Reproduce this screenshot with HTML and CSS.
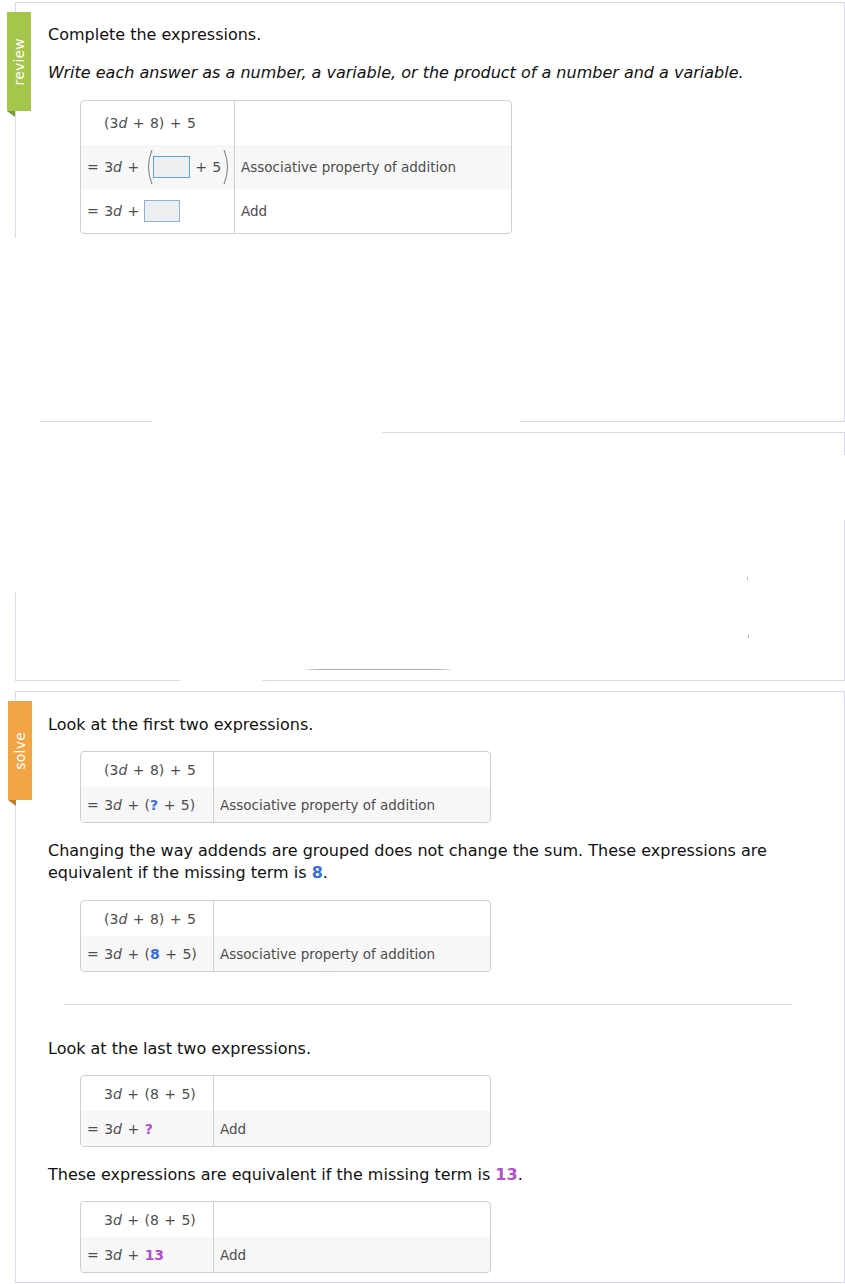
FILE: index.html
```html
<!DOCTYPE html>
<html>
<head>
<meta charset="utf-8">
<link rel="stylesheet" href="styles.css">
</head>
<body>
<div class="page">
  <section class="card review-card">
    <div class="tab tab-review"><span>review</span></div>
    <div class="review-main">
      <p class="lead">Complete the expressions.</p>
      <p class="lead italic">Write each answer as a number, a variable, or the product of a number and a variable.</p>
      <div class="steps steps-wide">
        <div class="step">
          <div class="expr first">(3<i>d</i> + 8) + 5</div>
          <div class="reason"></div>
        </div>
        <div class="step shaded">
          <div class="expr"><span class="eq">= 3<i>d</i> +</span><svg class="paren paren-l" width="8" height="36" viewBox="0 0 8 36"><path d="M7 1 Q0 18 7 35" fill="none" stroke="#777" stroke-width="1"/></svg><span class="blank blank-active"></span><span class="plus5">+ 5</span><svg class="paren paren-r" width="8" height="36" viewBox="0 0 8 36"><path d="M1 1 Q8 18 1 35" fill="none" stroke="#777" stroke-width="1"/></svg></div>
          <div class="reason">Associative property of addition</div>
        </div>
        <div class="step">
          <div class="expr"><span class="eq">= 3<i>d</i> +</span><span class="blank blank-plain"></span></div>
          <div class="reason">Add</div>
        </div>
      </div>
    </div>
    <div class="review-blank"></div>
  </section>
  <div class="rule-row">
    <span class="seg seg-a"></span><span class="seg seg-b"></span>
  </div>
  <div class="rule-row rule-gap">
    <span class="seg seg-c"></span>
  </div>
  <section class="ghost">
    <div class="ghost-a"></div>
    <div class="ghost-b"></div>
    <div class="ghost-c"><span class="tick"></span></div>
    <div class="ghost-d">
      <span class="tick"></span>
      <span class="grayline"></span>
    </div>
  </section>
  <div class="rule-row">
    <span class="seg seg-d"></span><span class="seg seg-e"></span>
  </div>

  <section class="card solve-card">
    <div class="tab tab-solve"><span>solve</span></div>
    <p class="lead">Look at the first two expressions.</p>
    <div class="steps">
      <div class="step">
        <div class="expr first">(3<i>d</i> + 8) + 5</div>
        <div class="reason"></div>
      </div>
      <div class="step shaded">
        <div class="expr">= 3<i>d</i> + (<b class="blue">?</b> + 5)</div>
        <div class="reason">Associative property of addition</div>
      </div>
    </div>
    <p class="lead para">Changing the way addends are grouped does not change the sum. These expressions are equivalent if the missing term is <b class="blue">8</b>.</p>
    <div class="steps">
      <div class="step">
        <div class="expr first">(3<i>d</i> + 8) + 5</div>
        <div class="reason"></div>
      </div>
      <div class="step shaded">
        <div class="expr">= 3<i>d</i> + (<b class="blue">8</b> + 5)</div>
        <div class="reason">Associative property of addition</div>
      </div>
    </div>
    <hr class="divider">
    <p class="lead">Look at the last two expressions.</p>
    <div class="steps">
      <div class="step">
        <div class="expr first">3<i>d</i> + (8 + 5)</div>
        <div class="reason"></div>
      </div>
      <div class="step shaded">
        <div class="expr">= 3<i>d</i> + <b class="purple">?</b></div>
        <div class="reason">Add</div>
      </div>
    </div>
    <p class="lead">These expressions are equivalent if the missing term is <b class="purple">13</b>.</p>
    <div class="steps">
      <div class="step">
        <div class="expr first">3<i>d</i> + (8 + 5)</div>
        <div class="reason"></div>
      </div>
      <div class="step shaded">
        <div class="expr">= 3<i>d</i> + <b class="purple">13</b></div>
        <div class="reason">Add</div>
      </div>
    </div>
  </section>
</div>
</body>
</html>
```

FILE: styles.css
```css
* { box-sizing: border-box; }
body {
  margin: 0;
  background: #fff;
  font-family: "DejaVu Sans", Verdana, sans-serif;
  color: #111;
}
.page {
  width: 845px;
  padding-top: 2px;
}
.card {
  position: relative;
  margin-left: 15px;
  width: 830px;
  border-top: 1px solid #dcd7f6;
  border-right: 1px solid #dcd7f6;
}
.tab {
  position: absolute;
  left: -8px;
  top: 9px;
  width: 24px;
  height: 99px;
  display: flex;
  align-items: center;
  justify-content: center;
}
.tab::after {
  content: "";
  position: absolute;
  left: 0;
  bottom: -6px;
  width: 0;
  height: 0;
  border-top: 6px solid #7d9a34;
  border-left: 8px solid transparent;
}
.tab span {
  writing-mode: vertical-rl;
  transform: rotate(180deg);
  color: #fff;
  font-size: 14px;
  letter-spacing: 0.2px;
}
.tab-review { background: #a4c64a; }
.tab-solve { background: #f1a545; }
.tab-solve::after { border-top-color: #c47e2a; }

.review-main {
  height: 235px;
  border-left: 1px solid #dcd7f6;
  padding: 21px 0 0 32px;
}
.review-blank { height: 183px; }

.lead {
  margin: 0;
  font-size: 16px;
  line-height: 22px;
}
.italic {
  font-style: italic;
  margin-top: 16px;
}
.steps {
  margin: 15px 0 17px 32px;
  width: 411px;
  border: 1px solid #cfcfcf;
  border-radius: 4px;
  overflow: hidden;
  color: #4d4d4d;
}
.steps-wide {
  width: 432px;
  margin-top: 16px;
}
.step {
  display: grid;
  grid-template-columns: 133px 1fr;
  height: 35px;
}
.steps-wide .step {
  grid-template-columns: 154px 1fr;
  height: 44px;
}
.step.shaded { background: #f7f7f7; }
.expr {
  border-right: 1px solid #cfcfcf;
  padding-left: 6px;
  display: flex;
  align-items: center;
  white-space: pre;
  font-size: 14px;
  word-spacing: 1px;
}
.expr.first { padding-left: 23px; }
.eq { white-space: pre; }
.reason {
  padding-left: 6px;
  display: flex;
  align-items: center;
  font-size: 13.5px;
}
.expr i { font-style: italic; }
.paren { display: block; flex: none; }
.paren-l { margin-left: 6px; }
.paren-r { margin-left: 2px; }
.blank {
  display: block;
  flex: none;
  width: 37px;
  height: 22px;
  background: #eceef0;
  border: 1px solid #8ab3df;
}
.blank-active { border-color: #5ea1e6; }
.blank-plain { margin-left: 5px; width: 36px; }
.plus5 { margin-left: 5px; }
.blue { color: #3a6fd8; }
.purple { color: #b14fcf; }

.rule-row {
  display: flex;
  height: 1px;
}
.rule-gap { margin-top: 10px; }
.seg { height: 1px; background: #dcd7f6; display: block; }
.seg-a { margin-left: 40px; width: 112px; }
.seg-b { margin-left: 368px; width: 325px; }
.seg-c { margin-left: 382px; width: 463px; }
.seg-d { margin-left: 15px; width: 165px; }
.seg-e { margin-left: 82px; width: 583px; }

.ghost {
  margin-left: 15px;
  width: 830px;
}
.ghost-a { height: 22px; border-right: 1px solid #dcd7f6; }
.ghost-b { height: 65px; }
.ghost-c {
  height: 72px;
  border-right: 1px solid #dcd7f6;
  position: relative;
}
.ghost-d {
  height: 88px;
  border-right: 1px solid #dcd7f6;
  border-left: 1px solid #dcd7f6;
  position: relative;
}
.tick {
  position: absolute;
  left: 732px;
  width: 1px;
  height: 3px;
  background: #b8b8b8;
}
.ghost-c .tick { top: 57px; }
.ghost-d .tick { top: 43px; }
.grayline {
  position: absolute;
  left: 289px;
  top: 77px;
  width: 146px;
  height: 1px;
  background: linear-gradient(to right, #e8eaea, #a7aeae 10%, #a7aeae 90%, #e8eaea);
}

.solve-card {
  margin-top: 10px;
  height: 592px;
  border-left: 1px solid #dcd7f6;
  border-bottom: 1px solid #dcd7f6;
  padding: 22px 0 0 32px;
}
.solve-card .steps { margin-left: 32px; }
.para { width: 740px; }
.para + .steps { margin-top: 16px; }
.divider {
  border: 0;
  height: 1px;
  background: #dcd7f6;
  margin: 32px 0 33px 16px;
  width: 728px;
}
```
